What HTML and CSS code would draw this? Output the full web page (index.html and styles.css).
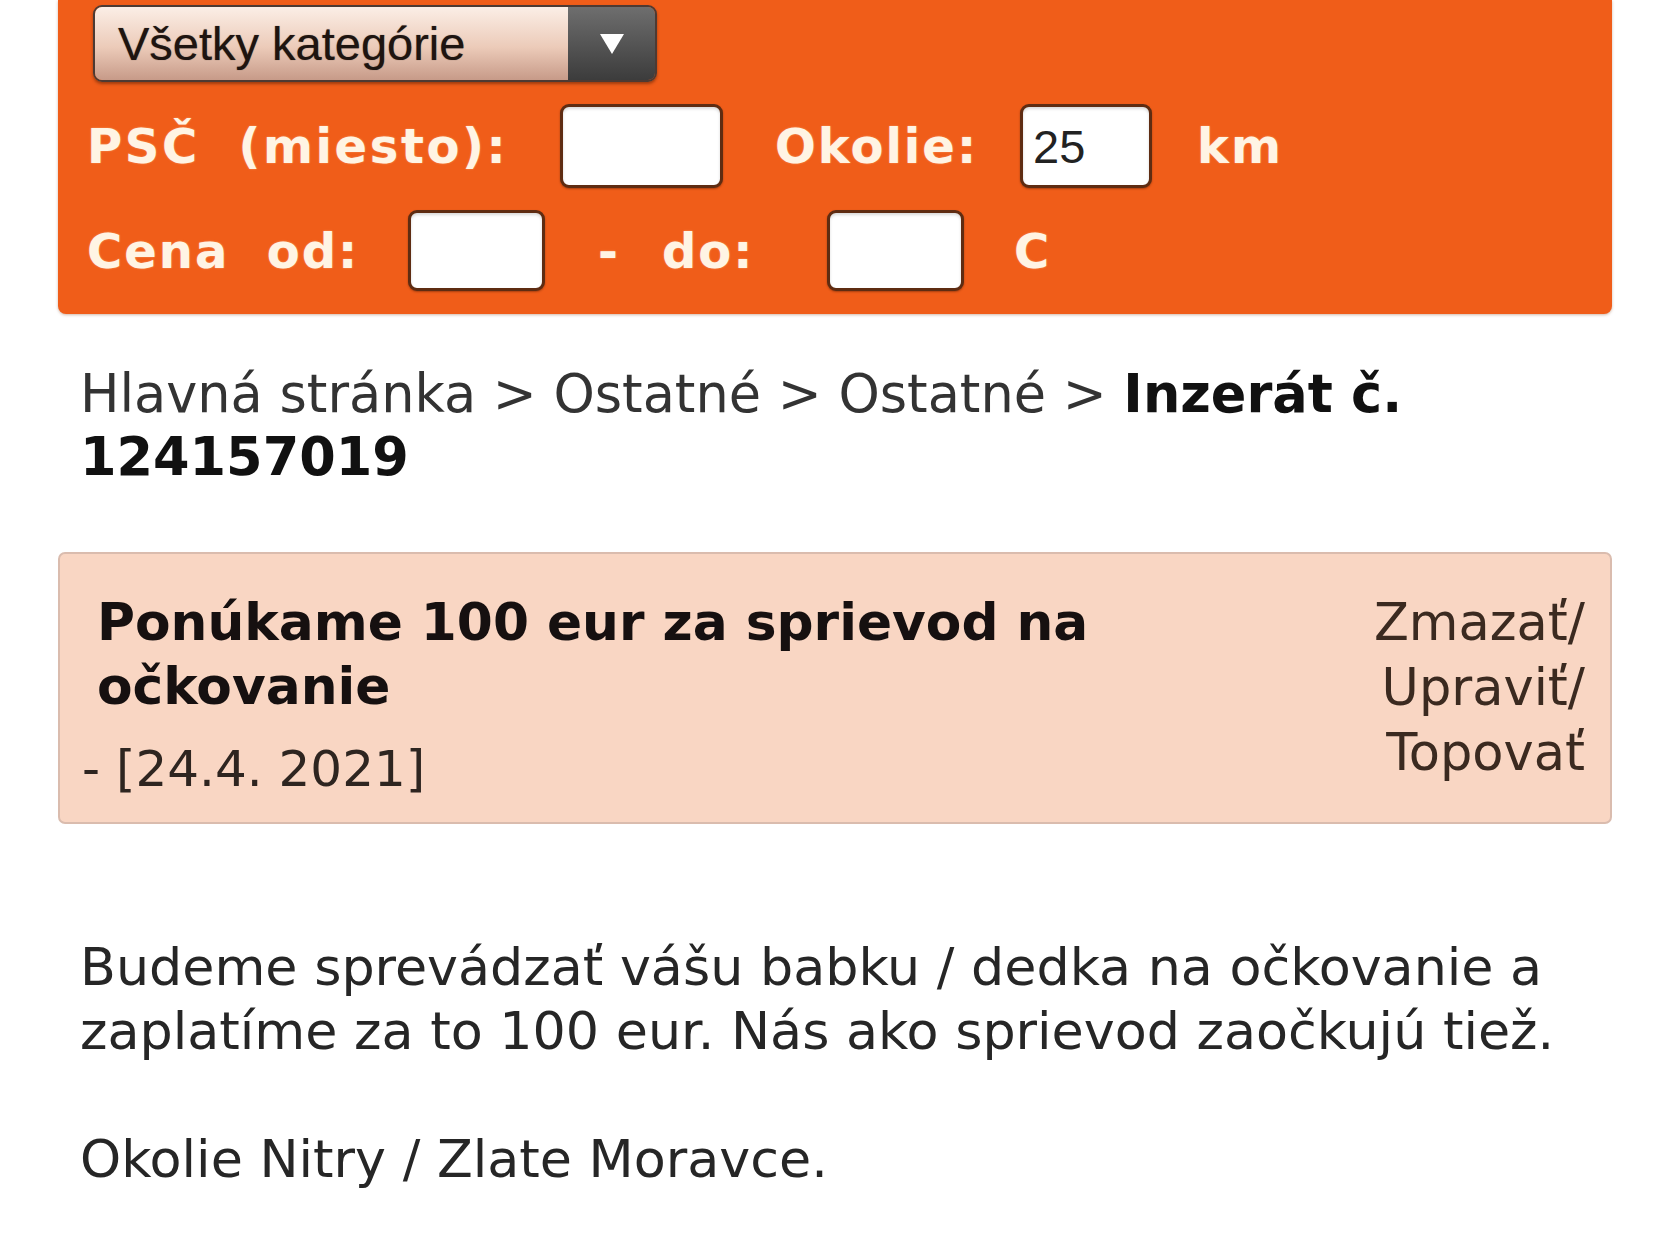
FILE: index.html
```html
<!DOCTYPE html>
<html lang="sk">
<head>
  <meta charset="UTF-8">
  <meta name="viewport" content="width=device-width, initial-scale=1.0">
  <title>Inzerát č. 124157019</title>
  <link rel="stylesheet" href="styles.css">
</head>
<body>
  <div id="page">
    <!-- Search box -->
    <form id="search">
      <div class="select">
        <span class="select-text">Všetky kategórie</span>
        <span class="select-arrow">
          <svg width="26" height="22" viewBox="0 0 26 22"><polygon points="1,1 25,1 13,21" fill="#fff"/></svg>
        </span>
      </div>
      <div class="row row-place">
        <label class="lbl lbl-psc">PSČ&nbsp; (miesto):</label>
        <input class="field field-psc" type="text">
        <label class="lbl lbl-okolie">Okolie:</label>
        <input class="field field-km" type="text" value="25">
        <span class="lbl lbl-km">km</span>
      </div>
      <div class="row row-price">
        <label class="lbl lbl-cena">Cena&nbsp; od:</label>
        <input class="field field-price" type="text">
        <span class="lbl lbl-dash">-</span>
        <label class="lbl lbl-do">do:</label>
        <input class="field field-price" type="text">
        <span class="lbl lbl-cur">C</span>
      </div>
    </form>

    <div class="crumbs">Hlavná stránka &gt; Ostatné &gt; Ostatné &gt; <b>Inzerát č.</b> <b>124157019</b></div>

    <!-- Ad header -->
    <div class="ad">
      <div class="ad-main">
        <h2 class="ad-title">Ponúkame 100 eur za sprievod na očkovanie</h2>
        <div class="ad-date">- [24.4. 2021]</div>
      </div>
      <div class="ad-links">Zmazať/<br>Upraviť/<br>Topovať</div>
    </div>

    <div class="text">
      Budeme sprevádzať vášu babku / dedka na očkovanie a zaplatíme za to 100 eur. Nás ako sprievod zaočkujú tiež.<br><br>Okolie Nitry / Zlate Moravce.
    </div>
  </div>
</body>
</html>
```

FILE: styles.css
```css
/* Basic reset */
* { margin: 0; padding: 0; box-sizing: border-box; }
body {
  background: #fff;
  font-family: Verdana, 'DejaVu Sans', sans-serif;
  color: #262626;
}
#page { width: 1554px; margin-left: 58px; }

/* Search box */
#search {
  background: #f05d19;
  border-radius: 0 0 8px 8px;
  padding: 5px 0 23px 29px;
  box-shadow: 0 1px 3px rgba(120, 50, 10, 0.35);
}
.select {
  display: flex; width: 564px; height: 77px; margin-left: 6px;
  border: 2px solid #4d3a33; border-radius: 9px; overflow: hidden;
  box-shadow: 0 2px 3px rgba(60, 20, 0, 0.45);
}
.select-text {
  flex: 1; display: flex; align-items: center; padding-left: 23px;
  font-family: 'Liberation Sans', Arial, sans-serif; font-size: 47px; color: #1e1410;
  text-shadow: 0 0 1px rgba(30, 20, 16, 0.6);
  background: linear-gradient(#fbeee6, #eccbb9 55%, #c79a88);
}
.select-arrow {
  width: 87px; display: flex; align-items: center; justify-content: center;
  background: linear-gradient(#6e6e6e, #3c3c3c);
}

.row { display: flex; align-items: center; margin-top: 22px; }
.lbl {
  font-weight: bold; font-size: 48px; letter-spacing: 2px; white-space: nowrap;
  color: #fff4e4; text-shadow: 0 0 2px rgba(255, 220, 180, 0.5);
}
.field {
  height: 84px; padding-left: 10px;
  border: 3px solid #5e2c12; border-radius: 9px; background: #fff;
  box-shadow: inset 0 2px 3px rgba(0, 0, 0, 0.15), 0 1px 2px rgba(60, 20, 0, 0.4);
  font-family: 'Liberation Sans', Arial, sans-serif; font-size: 47px; color: #222;
  outline: none;
}
.row-price .field { height: 81px; }
.lbl-psc { width: 473px; letter-spacing: 2.6px; }
.field-psc { width: 163px; }
.lbl-okolie { width: 245px; margin-left: 52px; }
.field-km { width: 132px; }
.lbl-km { margin-left: 45px; }
.lbl-cena { width: 321px; }
.field-price { width: 137px; }
.lbl-dash { width: 64px; margin-left: 53px; }
.lbl-do { width: 165px; }
.lbl-cur { margin-left: 50px; }

/* Breadcrumb */
.crumbs { padding: 48px 0 0 22px; font-size: 52.5px; line-height: 63px; color: #333; }
.crumbs b { color: #111; }

/* Ad header */
.ad {
  display: flex; justify-content: space-between; margin-top: 64px;
  background: #f9d6c3; border: 2px solid #dabcae; border-radius: 7px;
  padding: 36px 25px 21px 22px;
}
.ad-main { width: 1060px; }
.ad-title { padding-left: 15px; font-size: 51.8px; line-height: 64px; color: #161010; }
.ad-date { margin-top: 19px; font-size: 50px; line-height: 64px; color: #2e2520; }
.ad-links { text-align: right; font-size: 51px; line-height: 65px; color: #3b2a20; }

/* Ad text */
.text { margin-top: 111px; padding-left: 22px; font-size: 52.3px; line-height: 64px; color: #262626; }
```
